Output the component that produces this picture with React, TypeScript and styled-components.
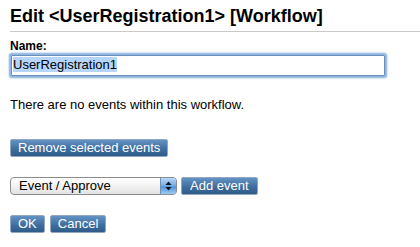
import React from "react";
import styled, { createGlobalStyle } from "styled-components";

const GlobalStyle = createGlobalStyle`
  body {
    margin: 0;
    background: #ffffff;
    font-family: "Liberation Sans", Arial, sans-serif;
    color: #000;
  }
`;

const Page = styled.div`
  padding-left: 10px;
  display: flex;
  flex-direction: column;
  align-items: flex-start;
`;

const Title = styled.h1`
  align-self: stretch;
  margin: 0;
  padding: 5px 0 4px;
  font-size: 18px;
  line-height: 22px;
  font-weight: 700;
  border-bottom: 1px solid #c9c9c9;
`;

const Label = styled.label`
  margin-top: 7px;
  font-size: 12px;
  line-height: 14px;
  font-weight: 700;
`;

const TextBox = styled.div`
  box-sizing: border-box;
  margin: 2px 0 0 1px;
  width: 374px;
  height: 21px;
  padding: 1px 0 0 1px;
  border: 1px solid #6b8fba;
  box-shadow: 0 0 0 1px #8db6e2, 0 0 2px 2px #7eaadb;
  border-radius: 1px;
  font-size: 13px;
  line-height: 15px;
`;

const Selected = styled.span`
  display: inline-block;
  background: #b5d5fd;
`;

const Message = styled.p`
  margin: 21px 0 0;
  font-size: 13px;
  line-height: 15px;
`;

const Button = styled.button<{ $pad?: number }>`
  box-sizing: border-box;
  height: 18px;
  padding: 0 ${(p) => p.$pad ?? 7}px;
  border: 1px solid #93a8bf;
  border-radius: 2px;
  background: linear-gradient(#6392c4, #3f6f9f 55%, #2f5c8a);
  color: #fff;
  font-family: "Liberation Sans", Arial, sans-serif;
  font-size: 13px;
  line-height: 16px;
  white-space: nowrap;
`;

const Row = styled.div<{ $gap: number }>`
  margin-top: 20px;
  display: flex;
  align-items: center;
  gap: ${(p) => p.$gap}px;
`;

const RemoveRow = styled(Row)`
  margin-top: 27px;
`;

const Select = styled.div`
  box-sizing: border-box;
  width: 167px;
  height: 18px;
  display: flex;
  border: 1px solid #8c8c8c;
  border-radius: 4px;
  background: linear-gradient(#ffffff, #f3f3f3 50%, #e2e2e2);
  overflow: hidden;
`;

const SelectText = styled.span`
  flex: 1;
  padding-left: 8px;
  font-size: 13px;
  line-height: 16px;
`;

const Arrows = styled.span`
  width: 15px;
  display: flex;
  align-items: center;
  justify-content: center;
  border-left: 1px solid #6f8fb5;
  background: linear-gradient(#b7d9f8, #6fa9e6 50%, #4f93dc 55%, #9ccbf4);
`;

function Updown() {
  return (
    <svg width="7" height="10" viewBox="0 0 7 10">
      <path d="M3.5 0.5 L6.5 4 H0.5 Z" fill="#111" />
      <path d="M3.5 9.5 L6.5 6 H0.5 Z" fill="#111" />
    </svg>
  );
}

export default function App() {
  return (
    <>
      <GlobalStyle />
      <Page>
        <Title>Edit &lt;UserRegistration1&gt; [Workflow]</Title>
        <Label>Name:</Label>
        <TextBox>
          <Selected>UserRegistration1</Selected>
        </TextBox>
        <Message>There are no events within this workflow.</Message>
        <RemoveRow $gap={5}>
          <Button>Remove selected events</Button>
        </RemoveRow>
        <Row $gap={4}>
          <Select>
            <SelectText>Event / Approve</SelectText>
            <Arrows>
              <Updown />
            </Arrows>
          </Select>
          <Button $pad={8}>Add event</Button>
        </Row>
        <Row $gap={5}>
          <Button>OK</Button>
          <Button>Cancel</Button>
        </Row>
      </Page>
    </>
  );
}
